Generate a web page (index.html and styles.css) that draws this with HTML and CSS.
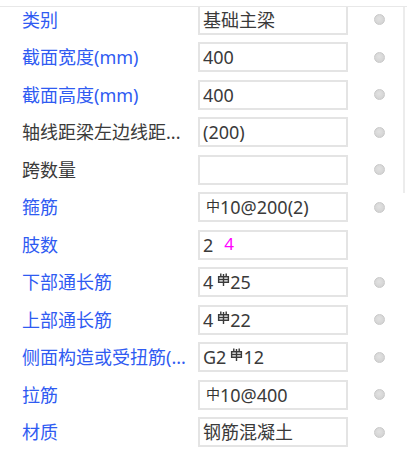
FILE: index.html
```html
<!DOCTYPE html>
<html>
    <head>
        <meta charset="utf-8">
        <title>梁属性</title>
        <link rel="stylesheet" href="styles.css">
    </head>
    <body>
        <div class="panel">
            <div class="list">
                <div class="row"><span class="label">类别</span><div class="val">基础主梁</div><i class="dot"></i></div>
                <div class="row"><span class="label">截面宽度(mm)</span><div class="val">400</div><i class="dot"></i></div>
                <div class="row"><span class="label">截面高度(mm)</span><div class="val">400</div><i class="dot"></i></div>
                <div class="row"><span class="label dark">轴线距梁左边线距...</span><div class="val">(200)</div><i class="dot"></i></div>
                <div class="row"><span class="label dark">跨数量</span><div class="val"></div><i class="dot"></i></div>
                <div class="row"><span class="label">箍筋</span><div class="val"><span class="hpb">中</span>10@200(2)</div><i class="dot"></i></div>
                <div class="row"><span class="label">肢数</span><div class="val">2<span class="tip">4</span></div><i class="nodot"></i></div>
                <div class="row"><span class="label">下部通长筋</span><div class="val">4<svg class="hrb" viewBox="0 0 12 12"><path d="M3.5 0.5v2.5M8.5 0.5v2.5M1.5 3.5h9v5h-9zM1.5 6h9M6 1v11"/></svg>25</div><i class="dot"></i></div>
                <div class="row"><span class="label">上部通长筋</span><div class="val">4<svg class="hrb" viewBox="0 0 12 12"><path d="M3.5 0.5v2.5M8.5 0.5v2.5M1.5 3.5h9v5h-9zM1.5 6h9M6 1v11"/></svg>22</div><i class="dot"></i></div>
                <div class="row"><span class="label">侧面构造或受扭筋(...</span><div class="val">G2<svg class="hrb" viewBox="0 0 12 12"><path d="M3.5 0.5v2.5M8.5 0.5v2.5M1.5 3.5h9v5h-9zM1.5 6h9M6 1v11"/></svg>12</div><i class="dot"></i></div>
                <div class="row"><span class="label">拉筋</span><div class="val"><span class="hpb">中</span>10@400</div><i class="dot"></i></div>
                <div class="row"><span class="label">材质</span><div class="val">钢筋混凝土</div><i class="dot"></i></div>
            </div>
            <div class="bar"><div class="thumb"></div></div>
        </div>
    </body>
</html>
```

FILE: styles.css
```css
html,body{
    margin: 0; padding: 0;
    background: #fff;
}
body{
    font-family: "Noto Sans", "Noto Sans CJK SC", sans-serif;
    font-size: 18px;
    color: #3a3a3a;
    padding-top: 6px;
}
.panel{
    display: flex;
    height: 449px;
    border-top: 1px solid #e8e8e8;
    overflow: hidden;
}
.list{
    width: 403px;
    margin-top: -6.25px;
}
.row{
    display: flex;
    align-items: center;
    height: 37.5px;
}
.label{
    width: 176px;
    padding-left: 22px;
    color: #2f5bf2;
    white-space: nowrap;
    line-height: 20px;
}
.label.dark{
    color: #3a3a3a;
}
.val{
    box-sizing: border-box;
    width: 150px;
    height: 30px;
    border: 2px solid #e4e4e4;
    padding-left: 3px;
    line-height: 26px;
    white-space: nowrap;
}
.hpb{
    font-family: "Noto Sans CJK SC", sans-serif;
    font-size: 14px;
    color: #333;
    position: relative;
    top: -3px;
    margin: 0 0 0 3px;
}
.hrb{
    width: 13px;
    height: 13px;
    margin: 0 0 0 4px;
    vertical-align: 3px;
    fill: none;
    stroke: #3a3a3a;
    stroke-width: 1.3;
}
.tip{
    color: #ff00ff;
    font-size: 17px;
    margin-left: 11px;
    position: relative;
    top: -2px;
}
.dot, .nodot{
    display: block;
    box-sizing: border-box;
    width: 11px;
    height: 11px;
    margin-left: 26px;
}
.dot{
    border-radius: 50%;
    border: 1px solid #c9c9c9;
    background: radial-gradient(circle at 45% 40%, #e2e2e2, #cfcfcf);
}
.bar{
    width: 4px;
}
.thumb{
    height: 186px;
    border-left: 2px solid #ececec;
}
```
